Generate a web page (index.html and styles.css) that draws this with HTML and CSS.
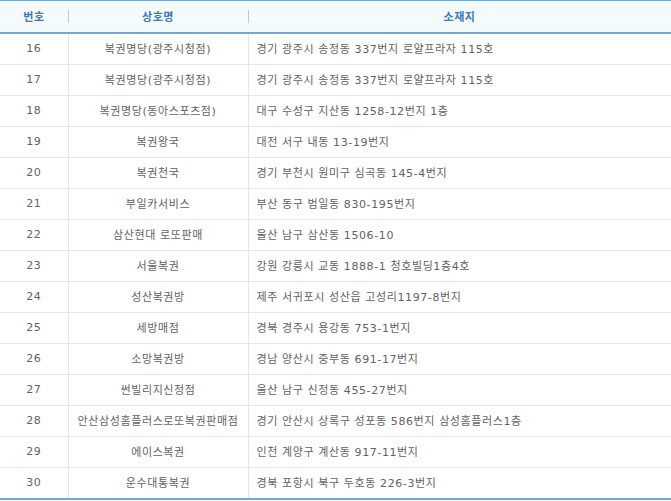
FILE: index.html
```html
<!DOCTYPE html>
<html lang="ko">
<head>
<meta charset="utf-8">
<link rel="stylesheet" href="styles.css">
</head>
<body>
<table class="list">
  <colgroup>
    <col class="c-no">
    <col class="c-name">
    <col class="c-addr">
  </colgroup>
  <thead>
    <tr>
      <th>번호</th>
      <th class="sep">상호명</th>
      <th class="sep">소재지</th>
    </tr>
  </thead>
  <tbody>
    <tr><td>16</td><td>복권명당(광주시청점)</td><td class="addr">경기 광주시 송정동 337번지 로얄프라자 115호</td></tr>
    <tr><td>17</td><td>복권명당(광주시청점)</td><td class="addr">경기 광주시 송정동 337번지 로얄프라자 115호</td></tr>
    <tr><td>18</td><td>복권명당(동아스포츠점)</td><td class="addr">대구 수성구 지산동 1258-12번지 1층</td></tr>
    <tr><td>19</td><td>복권왕국</td><td class="addr">대전 서구 내동 13-19번지</td></tr>
    <tr><td>20</td><td>복권천국</td><td class="addr">경기 부천시 원미구 심곡동 145-4번지</td></tr>
    <tr><td>21</td><td>부일카서비스</td><td class="addr">부산 동구 범일동 830-195번지</td></tr>
    <tr><td>22</td><td>삼산현대 로또판매</td><td class="addr">울산 남구 삼산동 1506-10</td></tr>
    <tr><td>23</td><td>서울복권</td><td class="addr">강원 강릉시 교동 1888-1 청호빌딩1층4호</td></tr>
    <tr><td>24</td><td>성산복권방</td><td class="addr">제주 서귀포시 성산읍 고성리1197-8번지</td></tr>
    <tr><td>25</td><td>세방매점</td><td class="addr">경북 경주시 용강동 753-1번지</td></tr>
    <tr><td>26</td><td>소망복권방</td><td class="addr">경남 양산시 중부동 691-17번지</td></tr>
    <tr><td>27</td><td>썬빌리지신정점</td><td class="addr">울산 남구 신정동 455-27번지</td></tr>
    <tr><td>28</td><td>안산삼성홈플러스로또복권판매점</td><td class="addr">경기 안산시 상록구 성포동 586번지 삼성홈플러스1층</td></tr>
    <tr><td>29</td><td>에이스복권</td><td class="addr">인천 계양구 계산동 917-11번지</td></tr>
    <tr><td>30</td><td>운수대통복권</td><td class="addr">경북 포항시 북구 두호동 226-3번지</td></tr>
  </tbody>
</table>
</body>
</html>
```
FILE: styles.css
```css
html, body {
  margin: 0;
  padding: 0;
  background: #ffffff;
}
body {
  width: 671px;
  font-family: "DejaVu Sans", "Noto Sans CJK KR", sans-serif;
  font-size: 11px;
  color: #626262;
}
.list {
  width: 671px;
  border-collapse: collapse;
  table-layout: fixed;
  border-top: 1px solid #6fa6dc;
  border-bottom: 2px solid #6fa6dc;
}
.c-no { width: 68px; }
.c-name { width: 180px; }
.c-addr { width: 423px; }
.list th {
  height: 30px;
  padding: 0 0 1px;
  background: #f5fafd;
  color: #3a78b9;
  font-family: "Noto Sans CJK KR", sans-serif;
  font-weight: bold;
  font-size: 11px;
  letter-spacing: 0.6px;
  text-align: center;
  border-bottom: 2px solid #6fa6dc;
  position: relative;
}
.list th.sep::before {
  content: "";
  position: absolute;
  left: 0;
  top: 9px;
  width: 1px;
  height: 13px;
  background: #a9cdeb;
}
.list td {
  height: 28px;
  padding: 0 0 2px;
  text-align: center;
  letter-spacing: 0.6px;
  border-bottom: 1px solid #e6e6e6;
  border-left: 1px solid #e6e6e6;
  white-space: nowrap;
}
.list td:first-child {
  border-left: none;
}
.list td.addr {
  text-align: left;
  padding-left: 8px;
}
.list tbody tr:last-child td {
  border-bottom: none;
}
```
